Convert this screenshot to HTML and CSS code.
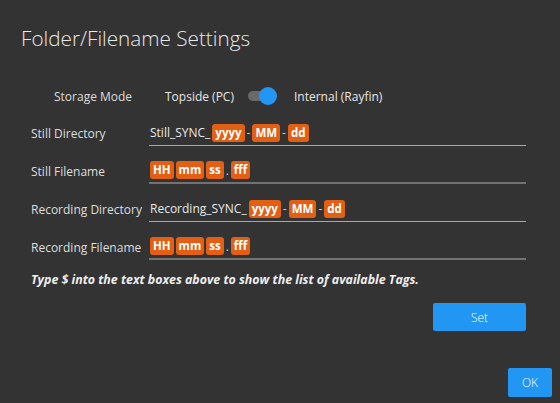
FILE: index.html
```html
<!DOCTYPE html>
<html lang="en">
<head>
    <meta charset="UTF-8">
    <title>Folder/Filename Settings</title>
    <link rel="stylesheet" href="styles.css">
</head>
<body>

    <div class="dialog">
        <h1 class="title">Folder/Filename Settings</h1>

        <!-- Где хранить файлы -->
        <div class="mode-row">
            <span class="mode-label">Storage Mode</span>
            <span class="mode-option">Topside (PC)</span>
            <span class="toggle"><span class="knob"></span></span>
            <span class="mode-option">Internal (Rayfin)</span>
        </div>

        <div class="fields">
            <div class="field">
                <label>Still Directory</label>
                <div class="input dir">Still_SYNC_<span class="tag">yyyy</span><span class="sep">-</span><span class="tag">MM</span><span class="sep">-</span><span class="tag">dd</span></div>
            </div>
            <div class="field">
                <label>Still Filename</label>
                <div class="input file"><span class="tag">HH</span><span class="tag">mm</span><span class="tag">ss</span><span class="sep">.</span><span class="tag">fff</span></div>
            </div>
            <div class="field">
                <label>Recording Directory</label>
                <div class="input dir">Recording_SYNC_<span class="tag">yyyy</span><span class="sep">-</span><span class="tag">MM</span><span class="sep">-</span><span class="tag">dd</span></div>
            </div>
            <div class="field">
                <label>Recording Filename</label>
                <div class="input file"><span class="tag">HH</span><span class="tag">mm</span><span class="tag">ss</span><span class="sep">.</span><span class="tag">fff</span></div>
            </div>
        </div>

        <p class="hint">Type $ into the text boxes above to show the list of available Tags.</p>

        <div class="actions">
            <button class="btn btn-set">Set</button>
        </div>
        <div class="footer">
            <button class="btn btn-ok">OK</button>
        </div>
    </div>

</body>
</html>
```

FILE: styles.css
```css
body {
    margin: 0;
    padding: 0;
    background-color: #333333;
    font-family: "Open Sans", "Noto Sans", sans-serif;
    color: #e6e6e6;
}
.dialog {
    width: 560px;
    height: 403px;
    box-sizing: border-box;
    padding: 24px 8px 6px 21px;
    display: flex;
    flex-direction: column;
}
.title {
    margin: 0;
    font-size: 20.7px;
    font-weight: 300;
    color: #e8e8e8;
    line-height: 29px;
}
.mode-row {
    display: flex;
    align-items: center;
    margin-top: 33px;
    padding-left: 33px;
    font-size: 12px;
    height: 20px;
}
.mode-label {
    width: 111px;
    color: #dcdcdc;
}
.mode-option {
    color: #e6e6e6;
}
.toggle {
    width: 25px;
    height: 10px;
    margin: 0 21px 0 14px;
    border-radius: 5px;
    background-color: #6a6a6a;
    position: relative;
}
.toggle .knob {
    position: absolute;
    right: -4px;
    top: -4px;
    width: 18px;
    height: 18px;
    border-radius: 50%;
    background-color: #2196f3;
}
.fields {
    margin-top: 14px;
    padding-left: 10px;
    display: flex;
    flex-direction: column;
    gap: 12px;
}
.field {
    display: flex;
    align-items: center;
    font-size: 12px;
}
.field label {
    width: 118px;
    color: #dedede;
}
.input {
    flex: 1;
    margin-right: 26px;
    height: 25px;
    display: flex;
    align-items: center;
    padding-left: 1px;
    gap: 2px;
    color: #e8e8e8;
}
.input.dir {
    border-bottom: 1px solid #a8a8a8;
}
.input.file {
    border-bottom: 2px solid #727272;
    height: 24px;
}
.tag {
    display: inline-block;
    background-color: #e35f14;
    color: #fff;
    font-weight: 700;
    font-size: 11.5px;
    line-height: 18px;
    padding: 0 3px;
    border-radius: 3px;
}
.sep {
    color: #cfcfcf;
}
.hint {
    margin: 11px 0 0 10px;
    font-size: 12.4px;
    font-weight: 700;
    font-style: italic;
    color: #eeeeee;
}
.actions {
    display: flex;
    justify-content: flex-end;
    margin-top: 15px;
    padding-right: 26px;
}
.footer {
    display: flex;
    justify-content: flex-end;
    margin-top: auto;
}
.btn {
    border: none;
    border-radius: 2px;
    background-color: #2196f3;
    color: #fff;
    font-family: "Open Sans", "Noto Sans", sans-serif;
    font-size: 12px;
    font-weight: 300;
    cursor: pointer;
}
.btn-set {
    width: 93px;
    height: 28px;
}
.btn-ok {
    width: 44px;
    height: 29px;
}
```
